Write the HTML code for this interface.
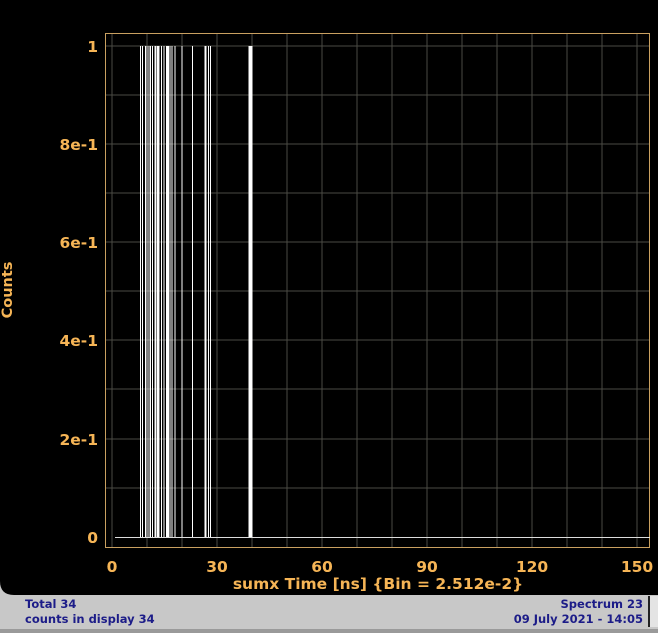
<!DOCTYPE html>
<html><head><style>
html,body{margin:0;padding:0;background:#c8c8c8;width:658px;height:633px;overflow:hidden}
svg{display:block}
</style></head><body>
<svg width="658" height="633" viewBox="0 0 658 633" xmlns="http://www.w3.org/2000/svg" font-family="DejaVu Sans, sans-serif">
<rect x="0" y="595" width="658" height="38" fill="#c8c8c8"/>
<path d="M0 0H658V595H14Q0 595 0 581Z" fill="#000"/>
<g stroke="#4a4a44" stroke-width="1">
<path d="M147 34V547M182 34V547M217 34V547M252 34V547M287 34V547M322 34V547M357 34V547M392 34V547M427 34V547M462 34V547M497 34V547M532 34V547M567 34V547M602 34V547M637 34V547"/>
<path d="M105 46H650M105 95H650M105 144H650M105 193H650M105 242H650M105 291H650M105 340H650M105 389H650M105 439H650M105 488H650"/>
<path d="M112 34V547"/>
</g>
<rect x="105.5" y="33.5" width="544" height="514" fill="none" stroke="#c9a060" stroke-width="1"/>
<g stroke="#fff" stroke-width="1">
<path d="M140.5 46V537M142.5 46V537M145.5 46V537M147 46V537M149 46V537M150.5 46V537M152.5 46V537M155 46V537M156 46V537M161.5 46V537M164 46V537M170 46V537M172 46V537M175 46V537M182 46V537M192.5 46V537M208.5 46V537M210.5 46V537"/>
</g>
<g fill="#fff"><rect x="157" y="46" width="2.5" height="491"/><rect x="166" y="46" width="3" height="491"/><rect x="204.5" y="46" width="2" height="491"/><rect x="248.5" y="46" width="4" height="491"/></g>
<path d="M115 537.5H650" stroke="#ddd" stroke-width="1"/>
<g fill="#f6b556" font-weight="bold" font-size="15.5">
<g text-anchor="end"><text x="98" y="52">1</text><text x="98" y="150">8e-1</text><text x="98" y="248">6e-1</text><text x="98" y="346">4e-1</text><text x="98" y="445">2e-1</text><text x="98" y="543">0</text></g>
<g text-anchor="middle"><text x="112" y="572">0</text><text x="217" y="572">30</text><text x="322" y="572">60</text><text x="427" y="572">90</text><text x="532" y="572">120</text><text x="637" y="572">150</text>
<text x="378" y="589">sumx Time [ns] {Bin = 2.512e-2}</text>
<text transform="translate(12 290) rotate(-90)" font-size="14.5">Counts</text></g>
</g>
<g fill="#1c1c88" font-weight="bold" font-size="11.5">
<text x="25" y="608">Total 34</text><text x="25" y="623">counts in display 34</text>
<g text-anchor="end"><text x="643" y="608">Spectrum 23</text><text x="643" y="623">09 July 2021 - 14:05</text></g>
</g>
<rect x="648" y="596" width="2" height="31" fill="#222"/>
<rect x="650" y="596" width="8" height="31" fill="#e4e4e4"/>
<rect x="0" y="629" width="658" height="4" fill="#9a9a9a"/>
</svg>
</body></html>
